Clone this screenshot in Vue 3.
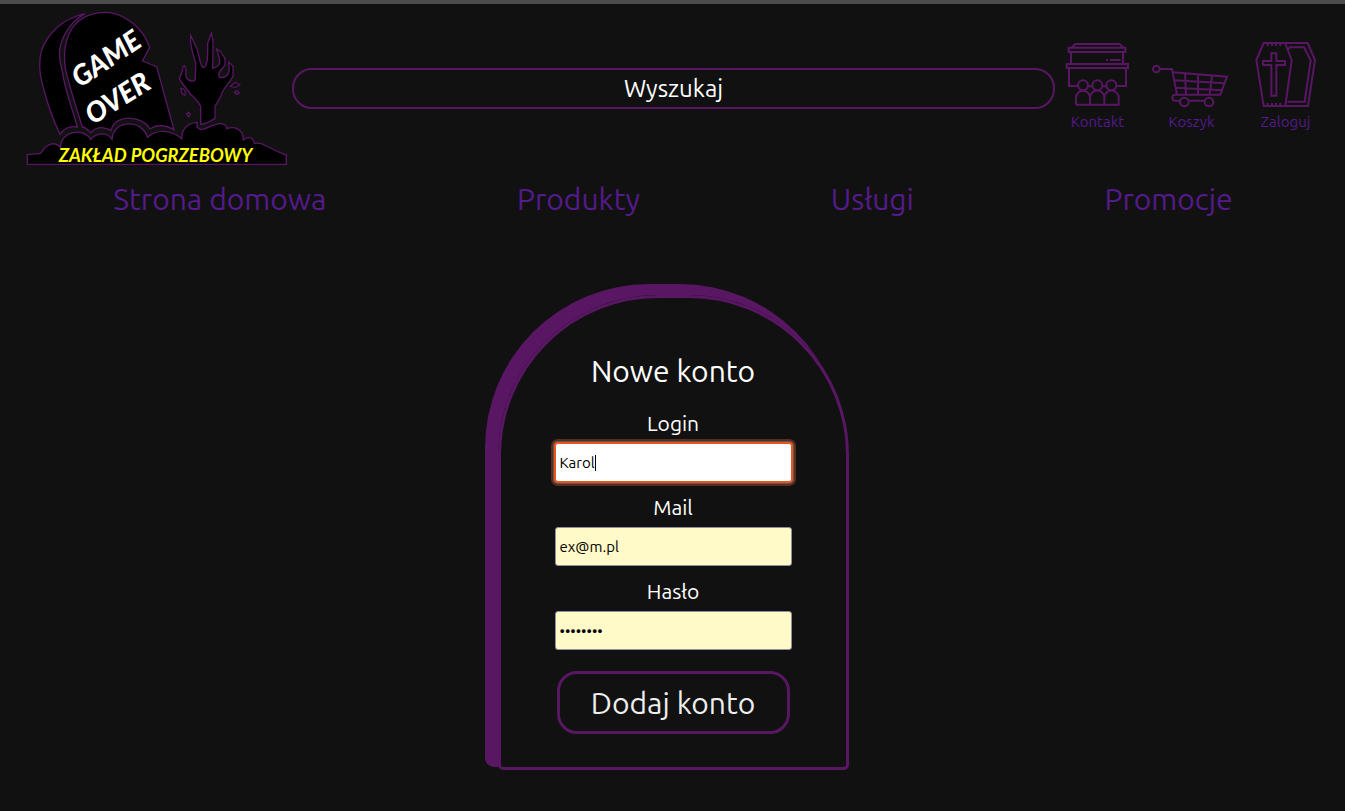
<script setup>
import { onMounted, ref } from 'vue'

const navigation = ['Strona domowa', 'Produkty', 'Usługi', 'Promocje']
const phrase = ref('')
const login = ref('Karol')
const mail = ref('ex@m.pl')
const password = ref('password')
const loginField = ref(null)

onMounted(() => loginField.value.focus())
</script>

<template>
  <div class="page">
    <header class="header">
      <a class="logo" href="#" aria-label="Game Over">
        <svg viewBox="54 24 822 480">
          <g class="shape">
            <path d="M255 41C215 50 185 70 170 83C140 112 122 145 120 175C116 215 124 240 132 270C145 320 162 365 180 403C192 385 212 377 232 381C215 320 195 270 187 215C178 180 177 165 179 150C185 110 210 65 255 41Z" />
            <path d="M247 381C225 310 205 250 196 205C190 160 195 120 215 87C240 48 285 34 330 38C380 47 430 85 449 142L427 183L470 200L522 390C500 375 470 372 450 387C425 345 345 340 333 392C310 378 290 380 272 398C265 390 258 382 247 381Z" />
            <path d="M82 493V464L122 460C140 430 165 422 182 443C178 395 250 380 272 418C290 398 320 395 336 418C340 355 430 360 442 412C470 385 515 390 545 416C545 385 565 370 591 367V382L603 389C620 388 640 370 665 370C675 373 682 380 680 386C700 378 730 385 730 420C745 408 760 412 763 430C790 425 800 445 859 465V493Z" />
            <path d="M602 373V318C590 300 578 287 572 284C560 264 546 252 538 236C540 228 548 222 549 200L554 197L558 208V230C565 245 585 248 586 235L587 190C580 160 568 140 572 106L592 150C598 170 602 205 612 202C622 200 624 160 623 130L634 100L639 120V160L638 205C655 200 662 195 658 175L650 147L662 155L675 175V195C665 210 650 220 658 232C675 235 685 225 688 210L686 187L699 198V230C690 245 675 260 668 275C660 300 650 310 645 318V355C630 365 615 372 602 373Z" />
            <path d="M543 266L551 267L557 278L554 286L546 280ZM692 259L706 247L719 255L706 262ZM703 277L711 272L718 278L711 283ZM565 337L571 343L566 350L560 343Z" />
          </g>
          <text class="stone" transform="translate(239 265) rotate(-34)">GAME</text>
          <text class="stone" transform="translate(278 376) rotate(-32)">OVER</text>
          <text class="company" x="176" y="486">ZAKŁAD POGRZEBOWY</text>
        </svg>
      </a>

      <input v-model="phrase" class="search" type="text" placeholder="Wyszukaj" aria-label="Wyszukaj" />

      <div class="shortcuts">
        <a class="shortcut" href="#">
          <svg viewBox="15 36 255 210">
            <path d="M64 53L76 42H208L221 53M56 53H226V66H56ZM63 66V102M219 66V102M168 90H174M180 90H212M50 102H234V114H50ZM57 114V168H82M228 114V168H202M115 169H127M157 169H169M78 224V203A21 21 0 0 1 120 203V224M120 203A21 21 0 0 1 163 203V224M163 203A21 21 0 0 1 206 203V224H78" />
            <circle cx="99" cy="166" r="15" />
            <circle cx="142" cy="166" r="15" />
            <circle cx="184" cy="166" r="15" />
          </svg>
          <span>Kontakt</span>
        </a>
        <a class="shortcut" href="#">
          <svg viewBox="27 36 255 210">
            <circle cx="49" cy="117" r="10" />
            <path d="M59 117H96L111 194H241L261 140L98 127M135 130L138 194M174 133V194M216 137L209 194M103 151L255 160M107 173L247 181M111 194H106A9 9 0 0 0 106 212H120M146 212H194" />
            <circle cx="133" cy="216" r="13" />
            <circle cx="207" cy="216" r="13" />
          </svg>
          <span>Koszyk</span>
        </a>
        <a class="shortcut" href="#">
          <svg viewBox="24 36 255 210">
            <path d="M86 39H150L170 90L151 228H86L64 90ZM150 39H218L240 90L219 228H151M156 62L164 52H207L227 91L209 215H158M109 70H124V93H150V105H124V197H109V105H84V93H109Z" />
            <path d="M98 42V48M111 42V48M123 42V48M136 42V48M98 225V219M111 225V219M123 225V219M136 225V219" />
          </svg>
          <span>Zaloguj</span>
        </a>
      </div>
    </header>

    <nav class="navigation">
      <a v-for="item in navigation" :key="item" href="#">{{ item }}</a>
    </nav>

    <main class="content">
      <form class="card" @submit.prevent>
        <h1>Nowe konto</h1>
        <div class="field">
          <label for="login">Login</label>
          <div class="entry">
            <input id="login" ref="loginField" v-model="login" type="text" />
            <span class="caret"></span>
          </div>
        </div>
        <div class="field">
          <label for="mail">Mail</label>
          <input id="mail" v-model="mail" class="filled" type="email" />
        </div>
        <div class="field">
          <label for="password">Hasło</label>
          <input id="password" v-model="password" class="filled" type="password" />
        </div>
        <button type="submit">Dodaj konto</button>
      </form>
    </main>
  </div>
</template>

<style>
body {
  margin: 0;
  background: #111;
}
</style>

<style scoped>
.page {
  box-sizing: border-box;
  min-height: 100vh;
  padding: 0 17px 0 18px;
  border-top: 4px solid #4c4c4c;
  background: #111;
  color: #fff;
  font-family: Ubuntu, "Noto Sans", sans-serif;
}

.header {
  display: flex;
  align-items: center;
  padding: 4px 0;
}

.logo {
  flex: none;
  width: 274px;
  height: 160px;
}

.logo svg {
  display: block;
  width: 100%;
  height: 100%;
}

.shape {
  fill: #000;
  stroke: #581663;
  stroke-width: 4;
}

.stone,
.company {
  font-family: Lato, sans-serif;
  font-style: italic;
}

.stone {
  fill: #fff;
  font-size: 84px;
  font-weight: 900;
}

.company {
  fill: #ff0;
  font-size: 55px;
  font-weight: 700;
}

.search {
  box-sizing: border-box;
  flex: 1;
  min-width: 0;
  height: 41px;
  padding: 0 16px;
  border: 2px solid #581663;
  border-radius: 20px;
  outline: none;
  background: transparent;
  color: #fff;
  font-family: inherit;
  font-size: 24px;
  text-align: center;
}

.search::placeholder {
  color: #fff;
  opacity: 1;
}

.shortcuts {
  display: flex;
  gap: 9px;
}

.shortcut {
  width: 85px;
  padding-bottom: 2px;
  color: #551a8b;
  font-size: 15px;
  line-height: 20px;
  text-align: center;
  text-decoration: none;
}

.shortcut svg {
  display: block;
  width: 100%;
  height: 70px;
  fill: none;
  stroke: #581663;
  stroke-width: 6;
}

.shortcut span {
  display: block;
}

.navigation {
  display: flex;
  justify-content: space-around;
  padding: 5px 0 7px;
}

.navigation a {
  color: #551a8b;
  font-size: 30px;
  line-height: 44px;
  text-decoration: none;
}

.content {
  display: flex;
  justify-content: center;
  padding: 67px 0 40px;
}

.card {
  box-sizing: border-box;
  display: flex;
  flex-direction: column;
  align-items: center;
  gap: 11px;
  width: 351px;
  padding: 53px 0 33px;
  border: 3px solid #581663;
  border-radius: 160px 160px 5px 5px;
  box-shadow: -9px -7px 0 4px #581663;
}

h1 {
  margin: 0 0 7px;
  font-size: 30px;
  font-weight: 400;
  line-height: 40px;
}

.field {
  display: flex;
  flex-direction: column;
  align-items: center;
  gap: 6px;
}

.field label {
  font-size: 21px;
  line-height: 28px;
}

.entry {
  position: relative;
  display: flex;
}

.caret {
  position: absolute;
  top: 12px;
  left: 40px;
  width: 1px;
  height: 16px;
  background: #000;
}

.field input {
  box-sizing: border-box;
  width: 237px;
  height: 39px;
  padding: 0 4px;
  border: 1px solid #8f8f9d;
  border-radius: 3px;
  outline: none;
  background: #fff;
  color: #000;
  font-family: inherit;
  font-size: 15px;
  caret-color: transparent;
}

.field .filled {
  background: #fffac8;
}

.field input:focus {
  border-color: #e95420;
  box-shadow: 0 0 0 1px #e95420, 0 0 0 2px #5d5753, 0 0 0 4px #5b2d20;
}

.card button {
  box-sizing: border-box;
  width: 233px;
  height: 63px;
  margin-top: 10px;
  padding: 0;
  border: 3px solid #581663;
  border-radius: 20px;
  background: transparent;
  color: #eee;
  font-family: inherit;
  font-size: 30px;
}
</style>
